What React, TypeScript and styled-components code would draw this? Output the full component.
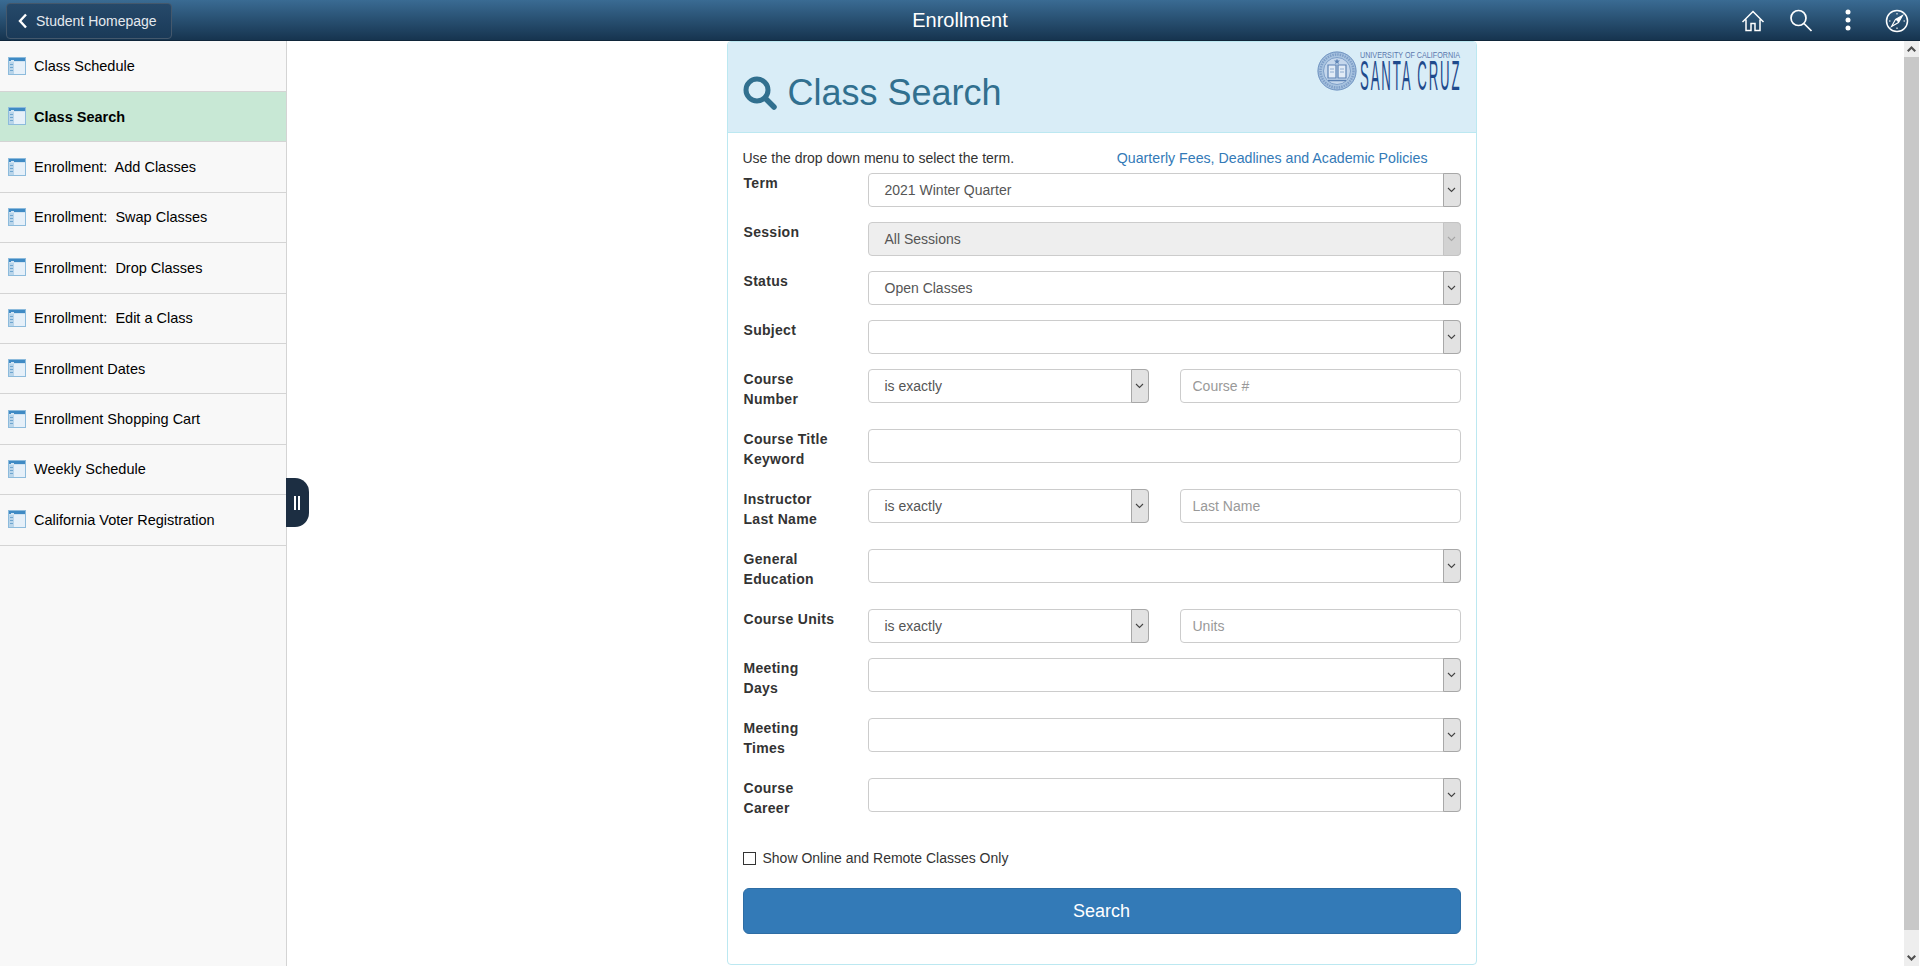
import React from "react";
import styled, { createGlobalStyle } from "styled-components";

const GlobalStyle = createGlobalStyle`
  html, body {
    margin: 0;
    padding: 0;
    height: 100%;
    overflow: hidden;
    background: #fff;
    font-family: "Liberation Sans", Arial, sans-serif;
  }
  * { box-sizing: border-box; }
`;

const Page = styled.div`
  display: flex;
  flex-direction: column;
  width: 1920px;
  height: 966px;
`;

const Banner = styled.header`
  position: relative;
  display: flex;
  align-items: center;
  justify-content: space-between;
  flex: 0 0 41px;
  padding: 1px 11px 0 6px;
  background: linear-gradient(#3a6b93, #16344f);
  border-bottom: 1px solid #10263a;
`;

const BackButton = styled.button`
  display: flex;
  align-items: center;
  gap: 8px;
  width: 166px;
  height: 36px;
  padding: 0 0 0 11px;
  background: linear-gradient(#26496a, #1a3a58);
  border: 1px solid #44586c;
  border-radius: 4px;
  color: #e4e9ee;
  font: 14px "Liberation Sans", Arial, sans-serif;
`;

const BannerTitle = styled.div`
  position: absolute;
  left: 0;
  right: 0;
  text-align: center;
  color: #fff;
  font-size: 20px;
  pointer-events: none;
`;

const BannerIcons = styled.div`
  display: flex;
  align-items: center;
  gap: 24px;
`;

const Body = styled.div`
  display: flex;
  flex: 1;
  min-height: 0;
`;

const Sidebar = styled.nav`
  position: relative;
  flex: 0 0 287px;
  padding-top: 0.6px;
  background: #f8f8f8;
  border-right: 1px solid #d4d4d4;
`;

const NavItem = styled.div<{ $active?: boolean }>`
  display: flex;
  align-items: center;
  gap: 8px;
  height: 50.4px;
  padding-left: 8px;
  border-bottom: 1px solid #d4d4d4;
  background: ${(p) => (p.$active ? "#c8e8d5" : "transparent")};
  color: #000;
  font-size: 14.5px;
  font-weight: ${(p) => (p.$active ? 700 : 400)};
  white-space: pre;
`;

const Handle = styled.div`
  position: absolute;
  top: 437px;
  left: 286px;
  width: 23px;
  height: 49px;
  display: flex;
  align-items: center;
  justify-content: center;
  gap: 2px;
  padding-right: 1px;
  background: #1c2e42;
  border-radius: 0 14px 14px 0;
`;

const HandleBar = styled.span`
  width: 2px;
  height: 14px;
  background: #fff;
`;

const Content = styled.main`
  flex: 1;
  display: flex;
  justify-content: center;
  padding-left: 12px;
`;

const Card = styled.section`
  width: 750px;
  height: 924px;
  background: #fff;
  border: 1px solid #bce8f1;
  border-radius: 4px;
  overflow: hidden;
`;

const CardHeader = styled.div`
  display: flex;
  align-items: flex-start;
  justify-content: space-between;
  height: 91px;
  padding: 9px 15px 0 15px;
  background: #d9edf7;
  border-bottom: 1px solid #bce8f1;
`;

const CardTitle = styled.h1`
  display: flex;
  align-items: center;
  gap: 11px;
  margin: 21px 0 0;
  color: #31708f;
  font-size: 36px;
  font-weight: 400;
`;

const LogoWrap = styled.div`
  display: flex;
  align-items: flex-start;
  gap: 3px;
`;

const LogoText = styled.div`
  display: flex;
  flex-direction: column;
  width: 101px;
`;

const LogoUniversity = styled.span`
  display: block;
  width: 101px;
  color: #5a78ad;
  font-size: 8.5px;
  line-height: 9px;
  white-space: nowrap;
  transform: scaleX(0.844);
  transform-origin: left center;
`;

const LogoCampus = styled.span`
  display: block;
  width: 101px;
  color: #1f4a8c;
  font-size: 42px;
  letter-spacing: 6px;
  line-height: 32px;
  white-space: nowrap;
  transform: scaleX(0.314);
  transform-origin: left center;
`;

const CardBody = styled.div`
  display: flex;
  flex-direction: column;
  padding: 16px 15px 0;
`;

const IntroRow = styled.div`
  display: flex;
  justify-content: space-between;
  height: 24px;
  padding-right: 33px;
  color: #333;
  font-size: 14px;
  line-height: 19px;
`;

const FeesLink = styled.a`
  color: #337ab7;
  font-size: 14.2px;
`;

const FormRow = styled.div<{ $tall?: boolean }>`
  display: flex;
  height: ${(p) => (p.$tall ? 60 : 49)}px;
`;

const RowLabel = styled.label`
  flex: 0 0 125px;
  padding-left: 1px;
  color: #333;
  font-size: 14px;
  font-weight: 700;
  line-height: 20px;
  letter-spacing: 0.3px;
  white-space: pre-line;
`;

const SelectBox = styled.div<{ $half?: boolean; $off?: boolean }>`
  position: relative;
  flex: ${(p) => (p.$half ? "0 0 281px" : "1")};
  display: flex;
  align-items: center;
  height: 34px;
  padding-left: 16px;
  background: ${(p) => (p.$off ? "#eeeeee" : "#fff")};
  border: 1px solid #ccc;
  border-radius: 4px;
  color: #555;
  font-size: 14px;
`;

const SelectArrow = styled.span<{ $off?: boolean }>`
  position: absolute;
  top: -1px;
  right: -1px;
  bottom: -1px;
  width: 18px;
  display: flex;
  align-items: center;
  justify-content: center;
  background: ${(p) => (p.$off ? "#d2d2d2" : "#e2e2e2")};
  border: 1px solid ${(p) => (p.$off ? "#c4c4c4" : "#a8a8a8")};
  border-radius: 0 4px 4px 0;
`;

const TextBox = styled.input`
  flex: 1;
  min-width: 0;
  height: 34px;
  padding: 0 12px;
  background: #fff;
  border: 1px solid #ccc;
  border-radius: 4px;
  color: #555;
  font: 14px "Liberation Sans", Arial, sans-serif;
  &::placeholder { color: #999; opacity: 1; }
`;

const FieldGap = styled.div`
  flex: 0 0 31px;
`;

const CheckRow = styled.div`
  display: flex;
  align-items: center;
  gap: 7px;
  margin-top: 10px;
  height: 20px;
  color: #333;
  font-size: 14px;
`;

const CheckBox = styled.span`
  width: 13px;
  height: 13px;
  background: #fff;
  border: 1px solid #333;
`;

const SearchButton = styled.button`
  width: 100%;
  height: 46px;
  margin-top: 20px;
  background: #337ab7;
  border: 1px solid #2e6da4;
  border-radius: 6px;
  color: #fff;
  font: 18px "Liberation Sans", Arial, sans-serif;
`;

const Scrollbar = styled.div`
  display: flex;
  flex-direction: column;
  flex: 0 0 16px;
  border-right: 1px solid #fff;
  background: #eeeeee;
`;

const ScrollEnd = styled.div`
  display: flex;
  align-items: center;
  justify-content: center;
  flex: 0 0 16px;
`;

const ScrollThumb = styled.div`
  flex: 0 0 873px;
  background: #c8c8c8;
`;

const ScrollTrack = styled.div`
  flex: 1;
`;

const NAV_ITEMS = [
  "Class Schedule",
  "Class Search",
  "Enrollment:  Add Classes",
  "Enrollment:  Swap Classes",
  "Enrollment:  Drop Classes",
  "Enrollment:  Edit a Class",
  "Enrollment Dates",
  "Enrollment Shopping Cart",
  "Weekly Schedule",
  "California Voter Registration",
];

function PageIcon() {
  return (
    <svg width="18" height="18" viewBox="0 0 18 18" style={{ flex: "none", marginTop: -1 }}>
      <rect x="0.5" y="0.5" width="17" height="17" fill="#e6f0f9" stroke="#8dbbdc" />
      <rect x="1" y="1" width="16" height="3" fill="#3f8ac4" />
      <rect x="1" y="4" width="16" height="1" fill="#cfe2f1" />
      <rect x="1" y="5" width="5" height="12" fill="#b9d5ea" />
      <rect x="3" y="3" width="3" height="1" fill="#d5e6f3" />
      <rect x="2" y="7" width="3" height="1" fill="#6fa6d0" />
      <rect x="2" y="10" width="3" height="1" fill="#6fa6d0" />
      <rect x="2" y="13" width="3" height="1" fill="#6fa6d0" />
    </svg>
  );
}

function Chevron({ color = "#444" }: { color?: string }) {
  return (
    <svg width="9" height="6" viewBox="0 0 9 6">
      <path d="M1 1l3.500 3.500L8 1" fill="none" stroke={color} strokeWidth="1.100" />
    </svg>
  );
}

function Seal() {
  return (
    <svg width="40" height="40" viewBox="0 0 40 40">
      <circle cx="20" cy="20" r="19.500" fill="#a9c4e0" />
      <circle cx="20" cy="20" r="19" fill="none" stroke="#6f93c0" strokeWidth="1" />
      <circle cx="20" cy="20" r="16.500" fill="none" stroke="#7f9fc8" strokeWidth="2.500" strokeDasharray="1.500 1" />
      <circle cx="20" cy="20" r="13.500" fill="#c5d7ec" stroke="#6f93c0" strokeWidth="0.800" />
      <path d="M20 7.500l.8 2 2.200.1-1.700 1.400.6 2.100-1.900-1.200-1.900 1.200.6-2.100-1.700-1.400 2.200-.1z" fill="#5c82b4" />
      <path d="M11 14h8v13h-8zM21 14h8v13h-8z" fill="#e2ebf6" stroke="#5c82b4" strokeWidth="1.200" />
      <path d="M13 18h4M13 21h4M23 18h4M23 21h4" stroke="#7f9fc8" strokeWidth="0.800" />
      <path d="M11 29.500h18" stroke="#5c82b4" strokeWidth="1.500" />
    </svg>
  );
}

function Logo() {
  return (
    <LogoWrap>
      <Seal />
      <LogoText>
        <LogoUniversity>UNIVERSITY OF CALIFORNIA</LogoUniversity>
        <LogoCampus>SANTA CRUZ</LogoCampus>
      </LogoText>
    </LogoWrap>
  );
}

function Select({ value, half, off }: { value?: string; half?: boolean; off?: boolean }) {
  return (
    <SelectBox $half={half} $off={off}>
      {value}
      <SelectArrow $off={off}>
        <Chevron color={off ? "#a5a5a5" : "#444"} />
      </SelectArrow>
    </SelectBox>
  );
}

export default function App() {
  return (
    <Page>
      <GlobalStyle />
      <Banner>
        <BackButton>
          <svg width="10" height="16" viewBox="0 0 10 16">
            <path d="M8 1.500L2 8l6 6.500" fill="none" stroke="#fff" strokeWidth="2.400" />
          </svg>
          Student Homepage
        </BackButton>
        <BannerTitle>Enrollment</BannerTitle>
        <BannerIcons>
          <svg width="24" height="24" viewBox="0 0 24 24" fill="none" stroke="#fff" strokeWidth="1.500">
            <path d="M1.500 13L12 2.500 22.500 13M5 10.500V21.500h5v-7h4v7h5V10.500" />
          </svg>
          <svg width="24" height="24" viewBox="0 0 24 24" fill="none" stroke="#fff" strokeWidth="1.700">
            <circle cx="9.500" cy="9" r="7.500" />
            <path d="M15 14.500l7.500 7.500" />
          </svg>
          <svg width="24" height="24" viewBox="0 0 24 24" fill="#fff">
            <circle cx="11" cy="3" r="2.500" />
            <circle cx="11" cy="11" r="2.500" />
            <circle cx="11" cy="19" r="2.500" />
          </svg>
          <svg width="24" height="24" viewBox="0 0 24 24" fill="none" stroke="#fff" strokeWidth="1.500">
            <circle cx="12" cy="12" r="10.500" />
            <path d="M17.500 6.500l-4 7-7 4 4-7z" strokeWidth="1.100" />
            <path d="M17.500 6.500l-7 4 3 3z" fill="#fff" stroke="none" />
            <path d="M12 4v1.500M12 18.500V20M4 12h1.500M18.500 12H20" strokeWidth="1.100" />
          </svg>
        </BannerIcons>
      </Banner>
      <Body>
        <Sidebar>
          {NAV_ITEMS.map((item) => (
            <NavItem key={item} $active={item === "Class Search"}>
              <PageIcon />
              {item}
            </NavItem>
          ))}
          <Handle>
            <HandleBar />
            <HandleBar />
          </Handle>
        </Sidebar>
        <Content>
          <Card>
            <CardHeader>
              <CardTitle>
                <svg width="34" height="34" viewBox="0 0 34 34" fill="none" stroke="#31708f">
                  <circle cx="14" cy="14" r="11" strokeWidth="5" />
                  <path d="M22 22l9 9" strokeWidth="5.500" strokeLinecap="round" />
                </svg>
                Class Search
              </CardTitle>
              <Logo />
            </CardHeader>
            <CardBody>
              <IntroRow>
                <span>Use the drop down menu to select the term.</span>
                <FeesLink>Quarterly Fees, Deadlines and Academic Policies</FeesLink>
              </IntroRow>
              <FormRow>
                <RowLabel>Term</RowLabel>
                <Select value="2021 Winter Quarter" />
              </FormRow>
              <FormRow>
                <RowLabel>Session</RowLabel>
                <Select value="All Sessions" off />
              </FormRow>
              <FormRow>
                <RowLabel>Status</RowLabel>
                <Select value="Open Classes" />
              </FormRow>
              <FormRow>
                <RowLabel>Subject</RowLabel>
                <Select />
              </FormRow>
              <FormRow $tall>
                <RowLabel>{"Course\nNumber"}</RowLabel>
                <Select value="is exactly" half />
                <FieldGap />
                <TextBox placeholder="Course #" />
              </FormRow>
              <FormRow $tall>
                <RowLabel>{"Course Title\nKeyword"}</RowLabel>
                <TextBox />
              </FormRow>
              <FormRow $tall>
                <RowLabel>{"Instructor\nLast Name"}</RowLabel>
                <Select value="is exactly" half />
                <FieldGap />
                <TextBox placeholder="Last Name" />
              </FormRow>
              <FormRow $tall>
                <RowLabel>{"General\nEducation"}</RowLabel>
                <Select />
              </FormRow>
              <FormRow>
                <RowLabel>Course Units</RowLabel>
                <Select value="is exactly" half />
                <FieldGap />
                <TextBox placeholder="Units" />
              </FormRow>
              <FormRow $tall>
                <RowLabel>{"Meeting\nDays"}</RowLabel>
                <Select />
              </FormRow>
              <FormRow $tall>
                <RowLabel>{"Meeting\nTimes"}</RowLabel>
                <Select />
              </FormRow>
              <FormRow $tall>
                <RowLabel>{"Course\nCareer"}</RowLabel>
                <Select />
              </FormRow>
              <CheckRow>
                <CheckBox />
                Show Online and Remote Classes Only
              </CheckRow>
              <SearchButton>Search</SearchButton>
            </CardBody>
          </Card>
        </Content>
        <Scrollbar>
          <ScrollEnd>
            <svg width="9" height="6" viewBox="0 0 9 6">
              <path d="M4.500 0L9 4.500 7.500 6 4.500 3 1.500 6 0 4.500z" fill="#505050" />
            </svg>
          </ScrollEnd>
          <ScrollThumb />
          <ScrollTrack />
          <ScrollEnd>
            <svg width="9" height="6" viewBox="0 0 9 6">
              <path d="M4.500 6L9 1.500 7.500 0 4.500 3 1.500 0 0 1.500z" fill="#505050" />
            </svg>
          </ScrollEnd>
        </Scrollbar>
      </Body>
    </Page>
  );
}
